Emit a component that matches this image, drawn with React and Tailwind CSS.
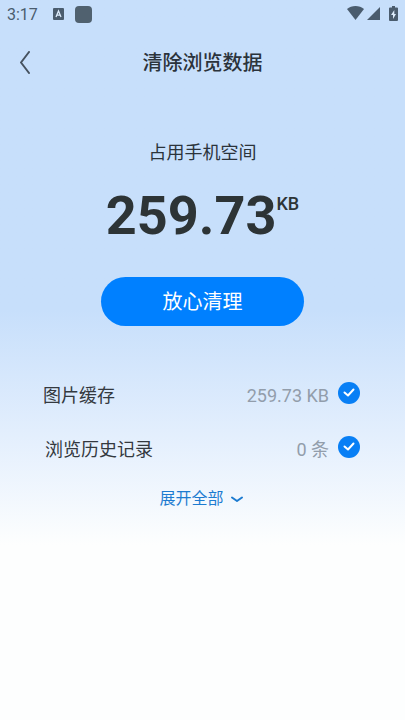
import { useState } from "react";

const ITEMS = [
  { id: "images", label: "图片缓存", value: "259.73 KB", inset: "pl-[43px]" },
  { id: "history", label: "浏览历史记录", value: "0 条", inset: "pl-[45px]" },
];

function StatusBar() {
  return (
    <div className="flex h-7 items-center justify-between px-[7px] text-[#4a5c6e]">
      <div className="flex items-center">
        <span className="w-[46px] pt-px text-base">3:17</span>
        <svg width="11" height="12" viewBox="0 0 11 12" aria-hidden="true">
          <rect width="11" height="12" rx="1" fill="currentColor" />
          <path d="M3 9 5.5 3 8 9M4 7.2h3" fill="none" stroke="#dcebfb" strokeWidth="1.3" />
        </svg>
        <span className="ml-[11px] size-[17px] rounded bg-[#50616f]" />
      </div>
      <div className="flex items-center pb-0.5">
        <svg width="17" height="14" viewBox="0 0 17 14" fill="currentColor" aria-hidden="true">
          <path d="M0 3C4.500-.9 12.500-.9 17 3L8.500 14Z" />
        </svg>
        <svg className="ml-[3px]" width="13" height="13" viewBox="0 0 13 13" fill="currentColor" aria-hidden="true">
          <path d="M13 0v13H0Z" />
        </svg>
        <svg className="ml-[9px]" width="9" height="15" viewBox="0 0 9 15" aria-hidden="true">
          <path d="M3 0h3v1.500h2q1 0 1 1V14q0 1-1 1H1q-1 0-1-1V2.500q0-1 1-1h2Z" fill="currentColor" />
          <path d="M5.300 4 2 9h2v4l3-5H5.300Z" fill="#dcebfb" />
        </svg>
      </div>
    </div>
  );
}

function CleanItem({ item, checked, onToggle }) {
  return (
    <li>
      <label htmlFor={item.id} className={`flex h-[54px] items-center pr-[45px] text-lg text-[#34393f] ${item.inset}`}>
        <span className="flex-1">{item.label}</span>
        <span className="text-[#929dab]">{item.value}</span>
        <span className="mb-1.5 ml-[9px] grid size-[22px]">
          <input
            id={item.id}
            type="checkbox"
            checked={checked}
            onChange={onToggle}
            className="peer col-start-1 row-start-1 size-[22px] appearance-none rounded-full border border-[#9aa9ba] checked:border-0 checked:bg-[#087ff5]"
          />
          <svg
            viewBox="0 0 22 22"
            className="pointer-events-none col-start-1 row-start-1 hidden size-[22px] peer-checked:block"
            fill="none"
            stroke="white"
            strokeWidth="2"
            strokeLinecap="round"
            strokeLinejoin="round"
            aria-hidden="true"
          >
            <path d="m6.500 10.500 3.500 3 5.500-6" />
          </svg>
        </span>
      </label>
    </li>
  );
}

export default function App() {
  const [checked, setChecked] = useState({ images: true, history: true });

  function toggle(id) {
    setChecked({ ...checked, [id]: !checked[id] });
  }

  return (
    <div className="min-h-screen bg-[#fdfefe] bg-linear-to-b from-[#c7dffb] from-[310px] via-[#e2eefd] via-[430px] to-[#fdfefe] to-[545px] font-[Roboto,'Noto_Sans_CJK_SC',sans-serif] text-[#2b333b]">
      <StatusBar />
      <header className="grid h-[68px] grid-cols-[48px_1fr_48px] items-center">
        <button type="button" aria-label="返回" className="flex h-12 items-center pl-5">
          <svg width="10" height="23" viewBox="0 0 10 23" fill="none" stroke="#46525f" strokeWidth="2" strokeLinecap="round" strokeLinejoin="round" aria-hidden="true">
            <path d="M9 1 1 11.500 9 22" />
          </svg>
        </button>
        <h1 className="pt-0.5 text-center text-xl font-medium">清除浏览数据</h1>
      </header>

      <main>
        <section className="flex flex-col items-center pt-[43px]">
          <p className="text-lg">占用手机空间</p>
          <p className="mt-[17px] flex items-start font-bold text-[#2d3436]">
            <span className="text-[54px] leading-[64px]">259.73</span>
            <span className="pt-[6px] text-lg leading-7 font-medium">KB</span>
          </p>
          <button type="button" className="mt-[29px] h-[49px] w-1/2 rounded-full bg-[#0080ff] text-xl text-white">
            放心清理
          </button>
        </section>

        <ul className="mt-[43px]">
          {ITEMS.map((item) => (
            <CleanItem key={item.id} item={item} checked={checked[item.id]} onToggle={() => toggle(item.id)} />
          ))}
        </ul>

        <button type="button" className="mx-auto mt-[10px] flex items-center gap-1.5 pr-0.5 text-base text-[#1c7bd0]">
          展开全部
          <svg width="14" height="7" viewBox="0 0 14 7" fill="none" stroke="currentColor" strokeWidth="2" strokeLinecap="round" strokeLinejoin="round" aria-hidden="true">
            <path d="m2 1.500 5 3.500 5-3.500" />
          </svg>
        </button>
      </main>
    </div>
  );
}
